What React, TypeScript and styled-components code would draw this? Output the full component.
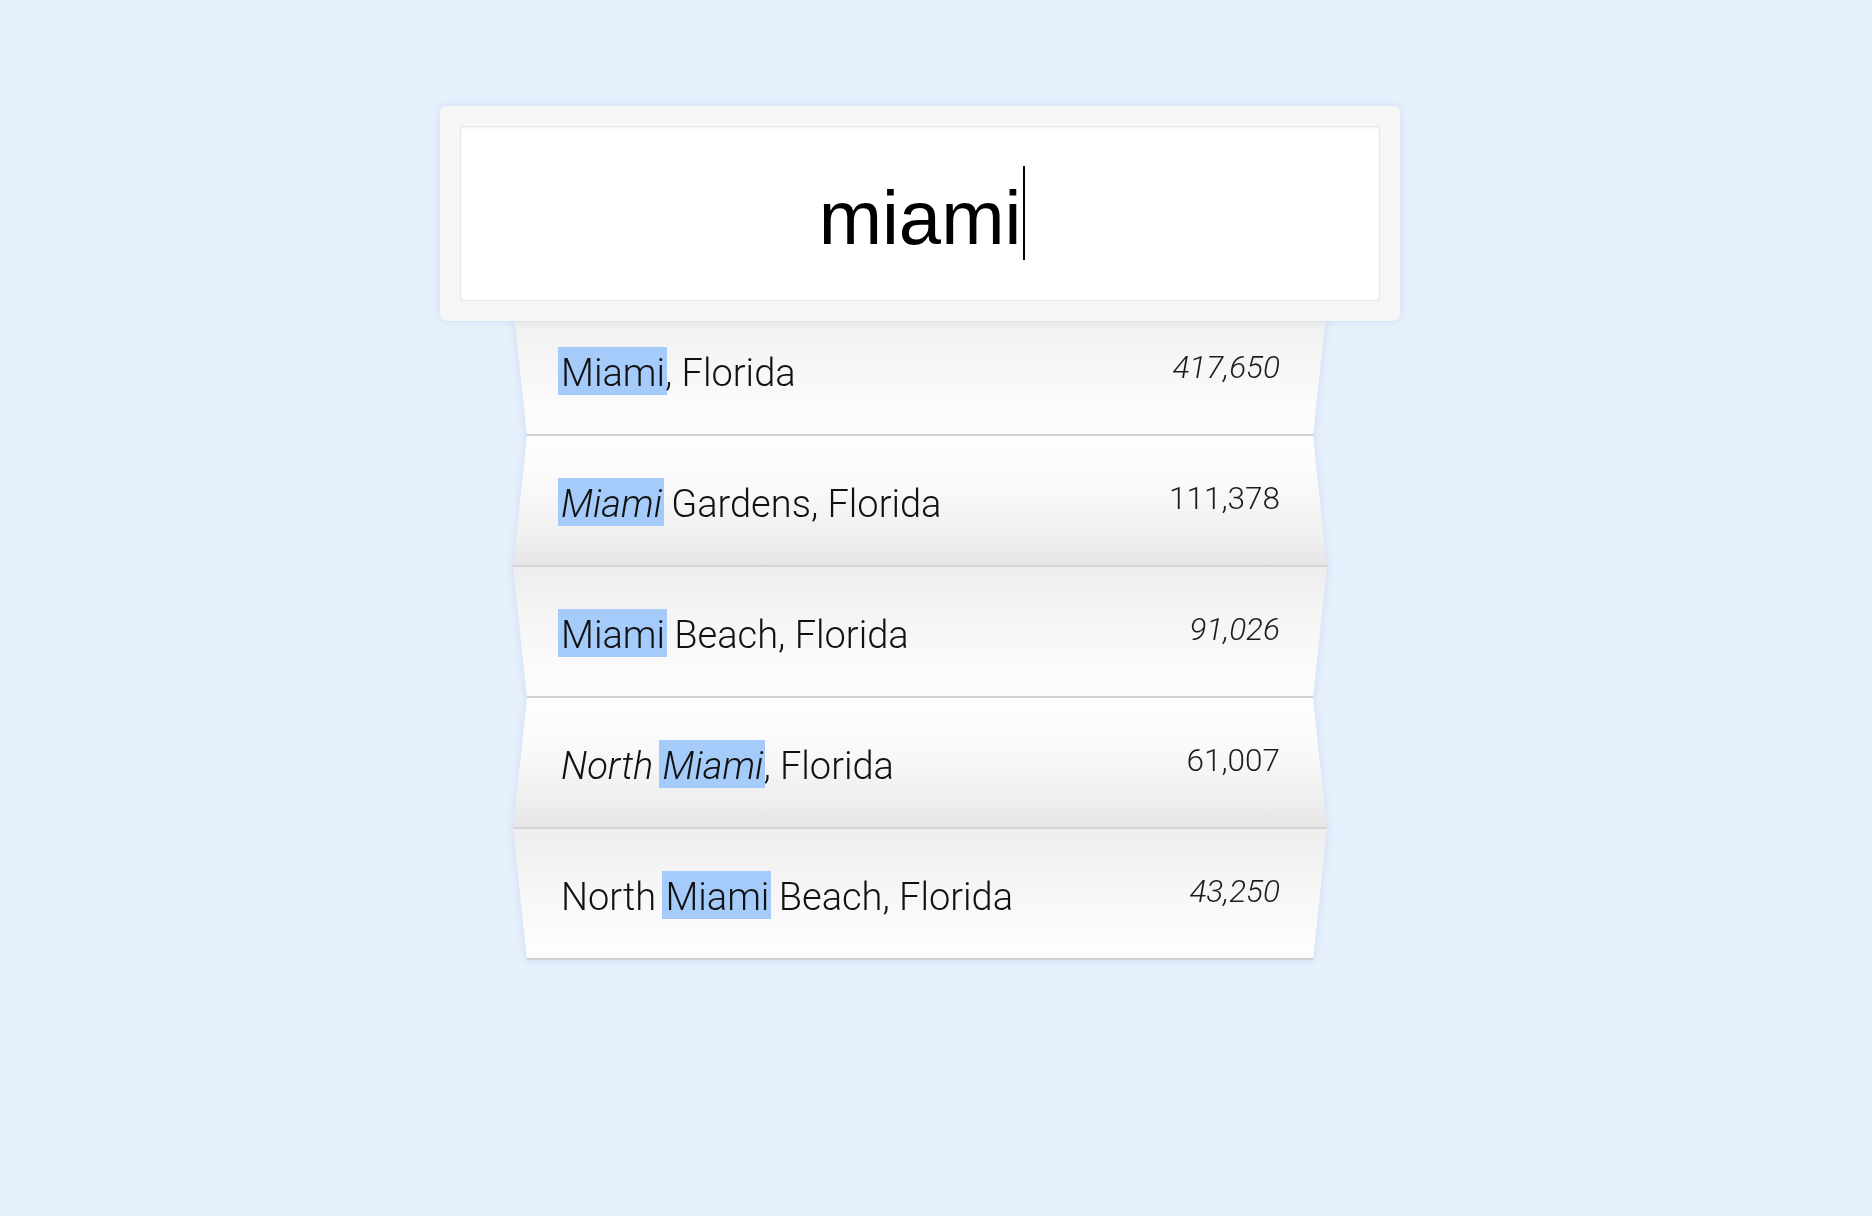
import React from "react";
import styled, { createGlobalStyle, css } from "styled-components";

const GlobalStyle = createGlobalStyle`
  html, body { margin: 0; padding: 0; }
  body { background: #e7f1fd; font-family: "Roboto", "Liberation Sans", sans-serif; }
`;

const Page = styled.div`
  min-height: 1216px;
  box-sizing: border-box;
  padding: 106px 32px 0 0;
  display: flex;
  flex-direction: column;
  align-items: center;
  background: #e7f1fd;
`;

const SearchPanel = styled.div`
  position: relative;
  z-index: 2;
  width: 960px;
  height: 215px;
  box-sizing: border-box;
  padding: 20px;
  background: #f6f6f6;
  border-radius: 7px;
  box-shadow: 0 0 10px rgba(40, 90, 160, 0.12);
`;

const SearchField = styled.div`
  height: 100%;
  box-sizing: border-box;
  padding-top: 8px;
  display: flex;
  align-items: center;
  justify-content: center;
  background: #ffffff;
  border: 1px solid #e7e7e7;
  box-shadow: inset 0 1px 3px rgba(0, 0, 0, 0.06);
`;

const Query = styled.span`
  position: relative;
  font-family: "Liberation Sans", Arial, sans-serif;
  font-size: 76px;
  line-height: 1;
  color: #000;
  &::after {
    content: "";
    position: absolute;
    left: calc(100% + 2px);
    top: -14px;
    width: 2px;
    height: 94px;
    background: #000;
  }
`;

const List = styled.ul`
  list-style: none;
  margin: -16px 0 0 0;
  padding: 0;
  width: 814px;
  filter: drop-shadow(0 1px 5px rgba(40, 90, 160, 0.14));
`;

const Row = styled.li<{ $fold: "near" | "far" }>`
  height: 131px;
  box-sizing: border-box;
  padding: 5px 47px 0 48px;
  display: flex;
  align-items: center;
  justify-content: space-between;
  font-weight: 300;
  color: #111;
  ${({ $fold }) =>
    $fold === "near"
      ? css`
          clip-path: polygon(0 0, 100% 0, calc(100% - 14px) 100%, 14px 100%);
          background: linear-gradient(to bottom, #eeeeee 0%, #f6f6f6 45%, #fdfdfd 92%, #fbfbfb 100%);
          box-shadow: inset 0 -2px 0 #cdd1d6;
        `
      : css`
          clip-path: polygon(14px 0, calc(100% - 14px) 0, 100% 100%, 0 100%);
          background: linear-gradient(to bottom, #fefefe 0%, #f9f9f9 40%, #eeeeee 80%, #e4e4e4 100%);
          box-shadow: inset 0 -2px 0 #d3d3d3;
        `}
`;

const Label = styled.span`
  font-size: 38px;
  white-space: pre;
  line-height: 1;
`;

const Part = styled.span<{ $italic?: boolean }>`
  font-style: ${({ $italic }) => ($italic ? "italic" : "normal")};
`;

const Match = styled.mark<{ $italic?: boolean }>`
  background: #a4cbf9;
  color: inherit;
  font-style: ${({ $italic }) => ($italic ? "italic" : "normal")};
  padding: 4px 2px 0 3px;
  margin: 0 -2px 0 -3px;
`;

const Population = styled.span<{ $italic?: boolean }>`
  font-size: 31.5px;
  line-height: 1;
  padding-bottom: 11px;
  color: #1c1c1c;
  font-style: ${({ $italic }) => ($italic ? "italic" : "normal")};
`;

type Segment = { text: string; match?: boolean; italic?: boolean };
type Result = { parts: Segment[]; population: string; italicPop?: boolean };

const results: Result[] = [
  { parts: [{ text: "Miami", match: true }, { text: ", Florida" }], population: "417,650", italicPop: true },
  { parts: [{ text: "Miami", match: true, italic: true }, { text: " Gardens, Florida" }], population: "111,378" },
  { parts: [{ text: "Miami", match: true }, { text: " Beach, Florida" }], population: "91,026", italicPop: true },
  {
    parts: [{ text: "North ", italic: true }, { text: "Miami", match: true, italic: true }, { text: ", Florida" }],
    population: "61,007",
  },
  {
    parts: [{ text: "North " }, { text: "Miami", match: true }, { text: " Beach, Florida" }],
    population: "43,250",
    italicPop: true,
  },
];

export default function App() {
  return (
    <>
      <GlobalStyle />
      <Page>
        <SearchPanel>
          <SearchField>
            <Query>miami</Query>
          </SearchField>
        </SearchPanel>
        <List>
          {results.map((r, i) => (
            <Row key={i} $fold={i % 2 === 0 ? "near" : "far"}>
              <Label>
                {r.parts.map((p, j) =>
                  p.match ? (
                    <Match key={j} $italic={p.italic}>
                      {p.text}
                    </Match>
                  ) : (
                    <Part key={j} $italic={p.italic}>
                      {p.text}
                    </Part>
                  )
                )}
              </Label>
              <Population $italic={r.italicPop}>{r.population}</Population>
            </Row>
          ))}
        </List>
      </Page>
    </>
  );
}
